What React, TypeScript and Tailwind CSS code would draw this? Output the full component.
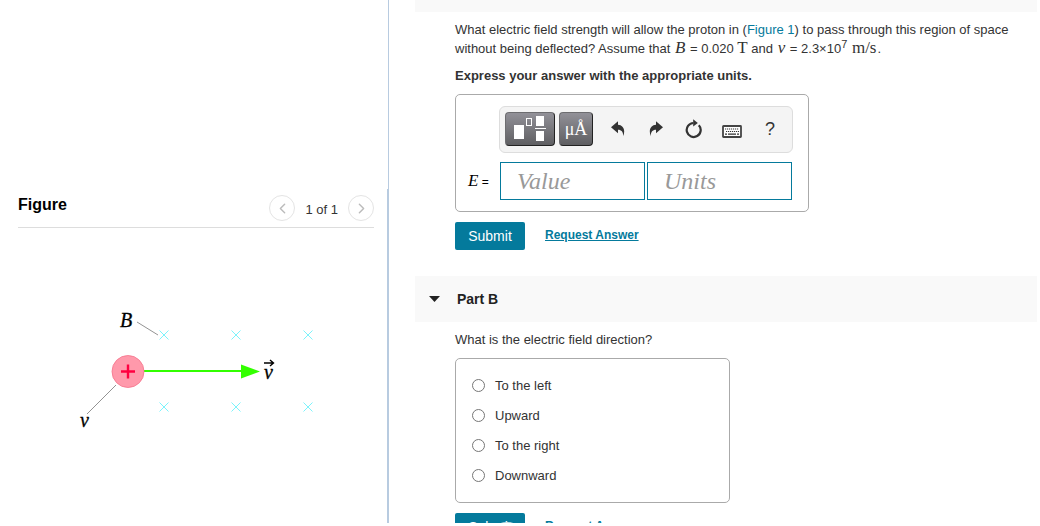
import { ChevronLeft, ChevronRight } from 'lucide-react';

const choices = ['To the left', 'Upward', 'To the right', 'Downward'];

// Centres of the field markers (field points into the page)
const fieldMarks = [
  [104, 45],
  [176, 45],
  [248, 45],
  [104, 117],
  [176, 117],
  [248, 117],
];

function ProtonFigure() {
  return (
    <svg width="270" height="150" viewBox="0 0 270 150" role="img" aria-label="Proton moving through a magnetic field">
      <g stroke="#7df3fb" strokeWidth="1">
        {fieldMarks.map(([x, y]) => (
          <path key={`${x}-${y}`} d={`M${x - 4.5} ${y - 4.5}l9 9m0 -9l-9 9`} />
        ))}
      </g>
      <path d="M77 32L98 45M56 95L27 124" stroke="#777" strokeWidth="0.8" />
      <path d="M84 81H182" stroke="#33ff00" strokeWidth="2" />
      <path d="M181 74.5L200 81.5L181 88.5Z" fill="#33ff00" />
      <circle cx="68" cy="81.5" r="16" fill="#ff99ab" stroke="#f5728a" strokeWidth="0.8" />
      <path d="M61 81.5h14M68 74.5v14" stroke="#ff0040" strokeWidth="2.4" />
      <path d="M204 73h9M210 70l3.5 3l-3.5 3" stroke="#000" strokeWidth="1.4" fill="none" />
      <g className="font-['Liberation_Serif',serif] text-[20px] italic" fill="#000" stroke="#000" strokeWidth="0.3">
        <text x="60" y="37">B</text>
        <text x="20" y="137">v</text>
        <text x="204" y="89">v</text>
      </g>
    </svg>
  );
}

function UndoIcon({ flip = false }: { flip?: boolean }) {
  return (
    <svg width="14" height="16" viewBox="0 0 14 16" className={flip ? '-scale-x-100' : ''} fill="#333">
      <path d="M0 6.2L7 0.3V3.8C12 4.2 14.8 8.5 12.2 15.2C12.3 10.8 10.6 8.8 7 8.7V12.2Z" />
    </svg>
  );
}

function ResetIcon() {
  return (
    <svg width="18" height="20" viewBox="0 0 18 20">
      <path d="M13.8 6.2A7 7 0 1 1 8.4 4" fill="none" stroke="#333" strokeWidth="2.2" />
      <path d="M8.2 0.3L12.8 4L8.2 7.6Z" fill="#333" />
    </svg>
  );
}

function KeyboardIcon() {
  return (
    <svg width="20" height="13" viewBox="0 0 20 13">
      <rect x="1" y="1" width="18" height="11" rx="0.5" fill="#fff" stroke="#444" strokeWidth="1.8" />
      <path d="M3 4h14M4 6.5h13" stroke="#333" strokeWidth="1.2" strokeDasharray="1.2 0.8" />
      <path d="M3 9.2h2M6 9.2h8M15 9.2h2" stroke="#333" strokeWidth="1.2" />
    </svg>
  );
}

const darkButton =
  'flex h-[34px] items-center justify-center rounded border border-[#6d6d70] border-r-[#222] border-b-[#222] bg-linear-to-b from-[#929198] to-[#5f5f62] text-white';
const iconButton = 'flex h-[34px] w-[38px] items-center justify-center text-[#333]';

function AnswerToolbar() {
  return (
    <div className="ml-[43px] flex h-[47px] items-start rounded-md border border-[#ddd] bg-[#f4f4f4] pt-[5px] pl-[5px]">
      <button type="button" aria-label="Templates" className={`${darkButton} w-[50px]`}>
        <svg width="32" height="26" viewBox="0 0 32 26" fill="#fff">
          <rect x="0" y="9" width="10" height="14" />
          <rect x="12.5" y="2.5" width="5" height="7" fill="none" stroke="#fff" />
          <rect x="22" y="0" width="8" height="10" />
          <rect x="21" y="12" width="11" height="1" />
          <rect x="22" y="15" width="8" height="10" />
        </svg>
      </button>
      <button type="button" aria-label="Units" className={`${darkButton} ml-1 w-[34px] font-['Liberation_Serif',serif] text-lg`}>
        μÅ
      </button>
      <div className="ml-1.5 flex">
        <button type="button" aria-label="Undo" className={iconButton}><UndoIcon /></button>
        <button type="button" aria-label="Redo" className={iconButton}><UndoIcon flip /></button>
        <button type="button" aria-label="Reset" className={iconButton}><ResetIcon /></button>
        <button type="button" aria-label="Keyboard" className={`${iconButton} pt-1`}><KeyboardIcon /></button>
        <button type="button" aria-label="Help" className={`${iconButton} text-lg`}>?</button>
      </div>
    </div>
  );
}

function SubmitRow() {
  return (
    <div className="mt-2.5 flex h-7 items-center gap-5">
      <button type="button" className="h-7 w-[70px] rounded-xs bg-[#047a9c] text-sm text-white">Submit</button>
      <a href="#answer" className="pb-0.5 text-xs font-bold text-[#047a9c] underline">Request Answer</a>
    </div>
  );
}

const mathText = "font-['Liberation_Serif',serif] text-[17px] leading-none";
const answerInput =
  "h-[38px] w-[145px] border border-[#047a9c] bg-white px-4 font-['Liberation_Serif',serif] text-2xl italic text-black outline-none placeholder:text-[#999]";

export default function App() {
  return (
    <div className="h-screen overflow-hidden bg-white pr-[3px] pb-[3px] font-['Liberation_Sans',Arial,sans-serif] text-[13px] leading-[19px] text-[#333]">
      <div className="flex h-full overflow-hidden">
        <aside className="flex w-[389px] shrink-0 flex-col">
          <div className="h-[189px] shrink-0 border-r border-[#b8cbe0]" />
          <div className="flex-1 border-r-2 border-[#b8cbe0] pr-[13px] pl-[18px]">
            <header className="flex h-[39px] items-center justify-between border-b border-[#ddd]">
              <h2 className="pb-1.5 text-base font-bold text-black">Figure</h2>
              <div className="flex items-center gap-2.5">
                <button type="button" aria-label="Previous figure" className="flex size-[26px] items-center justify-center rounded-full border border-[#e4e4e4] text-[#bbb]">
                  <ChevronLeft size={17} />
                </button>
                <span className="pt-0.5">1 of 1</span>
                <button type="button" aria-label="Next figure" className="flex size-[26px] items-center justify-center rounded-full border border-[#e4e4e4] text-[#bbb]">
                  <ChevronRight size={17} />
                </button>
              </div>
            </header>
            <div className="pt-[62px] pl-[42px]">
              <ProtonFigure />
            </div>
          </div>
        </aside>

        <main className="min-w-0 flex-1 pl-[26px]">
          <div className="h-3 bg-[#f9f9f9]" />
          <section className="pt-2 pr-6 pl-10">
            <p>
              What electric field strength will allow the proton in (<a href="#figure" className="text-[#047a9c]">Figure 1</a>) to pass through this region of space
              without being deflected? Assume that <i className={`${mathText} mx-px`}>B</i> = 0.020 <span className={mathText}>T</span> and{' '}
              <i className={`${mathText} mx-px`}>v</i> = 2.3×10<sup className="text-[11px]">7</sup> <span className={`${mathText} mx-px`}>m/s</span>.
            </p>
            <p className="mt-2 font-bold">Express your answer with the appropriate units.</p>
            <div className="mt-[9px] w-[354px] rounded-[5px] border border-[#aaa] pt-[11px] pr-[15px] pb-[11px]">
              <AnswerToolbar />
              <div className="mt-[9px] flex items-center">
                <label htmlFor="value" className="w-11 pl-3 text-xs text-black">
                  <i className={mathText}>E</i> =
                </label>
                <input id="value" placeholder="Value" className={answerInput} />
                <input aria-label="Units" placeholder="Units" className={`${answerInput} ml-0.5`} />
              </div>
            </div>
            <SubmitRow />
          </section>

          <button type="button" aria-expanded="true" className="mt-[26px] flex h-[46px] w-full items-center gap-[17px] bg-[#f9f9f9] pl-3.5 text-sm font-bold text-[#222]">
            <svg width="11" height="6" viewBox="0 0 11 6" fill="#222"><path d="M0 0H11L5.5 6Z" /></svg>
            Part B
          </button>

          <section className="relative pt-2 pl-10">
            <p>What is the electric field direction?</p>
            <fieldset className="mt-[9px] w-[275px] rounded-[5px] border border-[#aaa] pt-[11px] pb-3 pl-4">
              {choices.map((choice) => (
                <label key={choice} className="flex h-[30px] items-center gap-2.5">
                  <input type="radio" name="direction" className="size-[13px]" />
                  {choice}
                </label>
              ))}
            </fieldset>
            <SubmitRow />
            <button type="button" aria-label="Chat" className="absolute top-[200px] left-[70px] size-11 rounded-full border border-[#d5e8ee] bg-[#047a9c]" />
          </section>
        </main>
      </div>
    </div>
  );
}
